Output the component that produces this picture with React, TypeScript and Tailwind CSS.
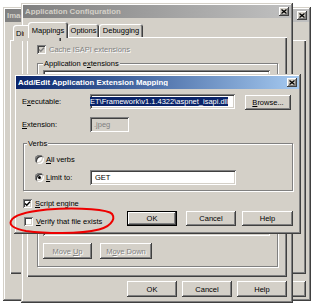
import React from 'react';

const raisedWin =
  'shadow-[inset_-1px_-1px_#404040,inset_1px_1px_#d4d0c8,inset_-2px_-2px_#808080,inset_2px_2px_#ffffff]';
const raisedBtn = 'shadow-[inset_-1px_-1px_#404040,inset_1px_1px_#ffffff,inset_-2px_-2px_#808080]';
const sunken =
  'shadow-[inset_1px_1px_#808080,inset_-1px_-1px_#ffffff,inset_2px_2px_#404040,inset_-2px_-2px_#d4d0c8]';
const panel = 'shadow-[inset_1px_1px_#ffffff,inset_-1px_-1px_#404040,inset_-2px_-2px_#808080]';
const grayed = 'text-[#808080] [text-shadow:1px_1px_0_#ffffff]';
const etched = 'border border-[#808080] shadow-[inset_1px_1px_#ffffff,1px_1px_#ffffff]';

function U({ children }: { children: React.ReactNode }) {
  return <span className="underline decoration-1 underline-offset-[1px]">{children}</span>;
}

function CloseBox() {
  return (
    <div className={`flex h-[9px] w-[10px] shrink-0 items-center justify-center bg-[#d4d0c8] ${raisedBtn}`}>
      <svg width="6" height="5" viewBox="0 0 6 5">
        <path d="M0.5 0.5L5.5 4.5M5.5 0.5L0.5 4.5" stroke="#000" strokeWidth="1.3" />
      </svg>
    </div>
  );
}

function TitleBar({ title, active = false, clip = '' }: { title: string; active?: boolean; clip?: string }) {
  return (
    <div
      className={`flex h-[13px] shrink-0 items-center justify-between overflow-hidden pl-[2px] pr-[2px] ${
        active
          ? 'bg-linear-to-r from-[#0a246a] to-[#a6caf0] text-white'
          : 'bg-linear-to-r from-[#808080] to-[#c0c0c0] text-[#d4d0c8]'
      }`}
    >
      <span className={`overflow-hidden whitespace-nowrap text-[7.8px] font-bold leading-none ${clip}`}>{title}</span>
      <CloseBox />
    </div>
  );
}

function Btn({
  children,
  className = '',
  def = false,
  disabled = false,
}: {
  children?: React.ReactNode;
  className?: string;
  def?: boolean;
  disabled?: boolean;
}) {
  return (
    <div
      className={`flex h-[15px] shrink-0 items-center justify-center bg-[#d4d0c8] ${raisedBtn} ${
        def ? 'border border-black' : ''
      } ${disabled ? grayed : ''} ${className}`}
    >
      {children && <span className="whitespace-nowrap">{children}</span>}
    </div>
  );
}

function Check({ checked = false, disabled = false }: { checked?: boolean; disabled?: boolean }) {
  return (
    <div
      className={`flex h-[9px] w-[9px] shrink-0 items-center justify-center ${
        disabled ? 'bg-[#d4d0c8]' : 'bg-white'
      } ${sunken}`}
    >
      {checked && (
        <svg width="7" height="7" viewBox="0 0 7 7">
          <path d="M1 3.4L2.8 5.2L6 1.8" fill="none" stroke={disabled ? '#808080' : '#000'} strokeWidth="1.4" />
        </svg>
      )}
    </div>
  );
}

function Radio({ on = false }: { on?: boolean }) {
  return (
    <div className={`flex h-[9px] w-[9px] shrink-0 items-center justify-center rounded-full bg-white ${sunken}`}>
      {on && <div className="h-[3px] w-[3px] rounded-full bg-black" />}
    </div>
  );
}

function Tab({ label, selected = false, className = '' }: { label?: React.ReactNode; selected?: boolean; className?: string }) {
  return (
    <div
      className={`flex items-center justify-center overflow-hidden rounded-t-[3px] bg-[#d4d0c8] shadow-[inset_1px_1px_#ffffff,inset_-1px_0_#404040,inset_-2px_0_#808080] ${
        selected ? 'relative z-10 -mb-[1px] h-[16px]' : 'h-[13px]'
      } ${className}`}
    >
      {label}
    </div>
  );
}

export default function App() {
  return (
    <div className="relative h-[305px] w-[312px] overflow-hidden bg-white font-['Liberation_Sans',Arial,sans-serif] text-[7.5px] leading-[9px] text-black">
      {/* back window */}
      <div className={`absolute left-[3px] top-[7px] flex h-[294px] w-[308px] flex-col bg-[#d4d0c8] p-[2px] ${raisedWin}`}>
        <TitleBar title="Images Properties" clip="w-[16px]" />
        <div className="mt-[3px] flex items-end pl-[8px]">
          <Tab
            selected
            className="w-[48px] justify-start pl-[3px]"
            label={<span className="w-[8px] overflow-hidden whitespace-nowrap">Directory</span>}
          />
        </div>
        <div className={`ml-[5px] mr-[3px] h-[234px] ${panel}`} />
        <div className="mt-[7px] flex justify-end gap-[5px] pr-[3px]">
          <Btn className="h-[16px] w-[50px]" />
          <Btn className="h-[16px] w-[50px]" />
          <Btn className="h-[16px] w-[50px]" />
          <Btn className="h-[16px] w-[50px]" />
        </div>
      </div>

      {/* Application Configuration */}
      <div className={`absolute left-[21px] top-[3px] flex h-[300px] w-[272px] flex-col bg-[#d4d0c8] p-[2px] ${raisedWin}`}>
        <TitleBar title="Application Configuration" />
        <div className="mt-[4px] flex h-[15px] items-end pl-[5px]">
          <Tab selected label="Mappings" className="w-[40px]" />
          <Tab label="Options" className="w-[31px]" />
          <Tab label="Debugging" className="w-[44px]" />
        </div>
        <div className={`mx-[4px] flex h-[240px] flex-col px-[10px] pt-[8px] ${panel}`}>
          <div className="flex h-[9px] items-center gap-[3px]">
            <Check checked disabled />
            <span className={grayed}>Cache ISAPI extensions</span>
          </div>
          <fieldset className={`mt-[5px] w-[241px] pb-[7px] pl-[5px] pr-[7px] ${etched}`}>
            <legend className="bg-[#d4d0c8] px-[1px]">
              Application e<U>x</U>tensions
            </legend>
            <div className={`mt-[2px] h-[166px] bg-white ${sunken}`} />
            <div className="mt-[7px] flex gap-[8px]">
              <Btn disabled className="h-[16px] w-[49px]">
                Move <U>U</U>p
              </Btn>
              <Btn disabled className="h-[16px] w-[52px]">
                M<U>o</U>ve Down
              </Btn>
            </div>
          </fieldset>
        </div>
        <div className="mt-[4px] flex justify-end gap-[5px] pr-[4px]">
          <Btn className="h-[16px] w-[50px]">OK</Btn>
          <Btn className="h-[16px] w-[50px]">Cancel</Btn>
          <Btn className="h-[16px] w-[50px]">Help</Btn>
        </div>
      </div>

      {/* Add/Edit dialog */}
      <div className={`absolute left-[14px] top-[74px] flex h-[160px] w-[287px] flex-col bg-[#d4d0c8] p-[2px] ${raisedWin}`}>
        <TitleBar active title="Add/Edit Application Extension Mapping" />
        <div className="flex flex-col px-[6px] pt-[4px]">
          <div className="flex items-center">
            <span className="w-[68px]">
              E<U>x</U>ecutable:
            </span>
            <div className={`flex h-[15px] w-[145px] items-center overflow-hidden bg-white pl-[2px] ${sunken}`}>
              <span className="-ml-[2px] whitespace-nowrap bg-[#0a246a] text-white">
                ET\Framework\v1.1.4322\aspnet_isapi.dll
              </span>
            </div>
            <Btn className="ml-[10px] mt-[2px] w-[46px]">
              <U>B</U>rowse...
            </Btn>
          </div>
          <div className="mt-[7px] flex items-center">
            <span className="w-[68px]">
              <U>E</U>xtension:
            </span>
            <div className={`flex h-[15px] w-[39px] items-center bg-[#d4d0c8] pl-[4px] text-[#808080] ${sunken}`}>.jpeg</div>
          </div>
          <fieldset className={`ml-[1px] mt-[7px] w-[270px] pb-[5px] pl-[3px] ${etched}`}>
            <legend className="bg-[#d4d0c8] px-[1px]">Verbs</legend>
            <div className="ml-[8px] mt-[6px] flex h-[10px] items-center gap-[2px]">
              <Radio />
              <span>
                <U>A</U>ll verbs
              </span>
            </div>
            <div className="ml-[8px] mt-[6px] flex h-[15px] items-center">
              <div className="flex w-[55px] items-center gap-[2px]">
                <Radio on />
                <span>
                  <U>L</U>imit to:
                </span>
              </div>
              <div className={`flex h-[15px] w-[146px] items-center bg-white pl-[5px] ${sunken}`}>GET</div>
            </div>
          </fieldset>
          <div className="mt-[7px] flex items-end">
            <div className="flex flex-col">
              <div className="ml-[1px] flex h-[10px] items-center gap-[3px]">
                <Check checked />
                <span>
                  <U>S</U>cript engine
                </span>
              </div>
              <div className="ml-[2px] mt-[8px] flex h-[10px] items-center gap-[3px]">
                <Check />
                <span>
                  <U>V</U>erify that file exists
                </span>
              </div>
            </div>
            <div className="ml-auto flex">
              <Btn def className="mr-[9px] w-[50px]">
                OK
              </Btn>
              <Btn className="mr-[6px] w-[50px]">Cancel</Btn>
              <Btn className="w-[51px]">Help</Btn>
            </div>
          </div>
        </div>
      </div>

      {/* red annotation */}
      <svg className="pointer-events-none absolute left-[7px] top-[206px]" width="110" height="30" viewBox="0 0 110 30">
        <path
          d="M40 3.5C60 2 92 2 103 6.5C110 10 106 20 92 23.5C72 28.5 38 27.5 19 25C7 23 2 19 4 15C6 10 16 6 40 3.5"
          fill="none"
          stroke="#ee0000"
          strokeWidth="2"
        />
      </svg>
    </div>
  );
}
